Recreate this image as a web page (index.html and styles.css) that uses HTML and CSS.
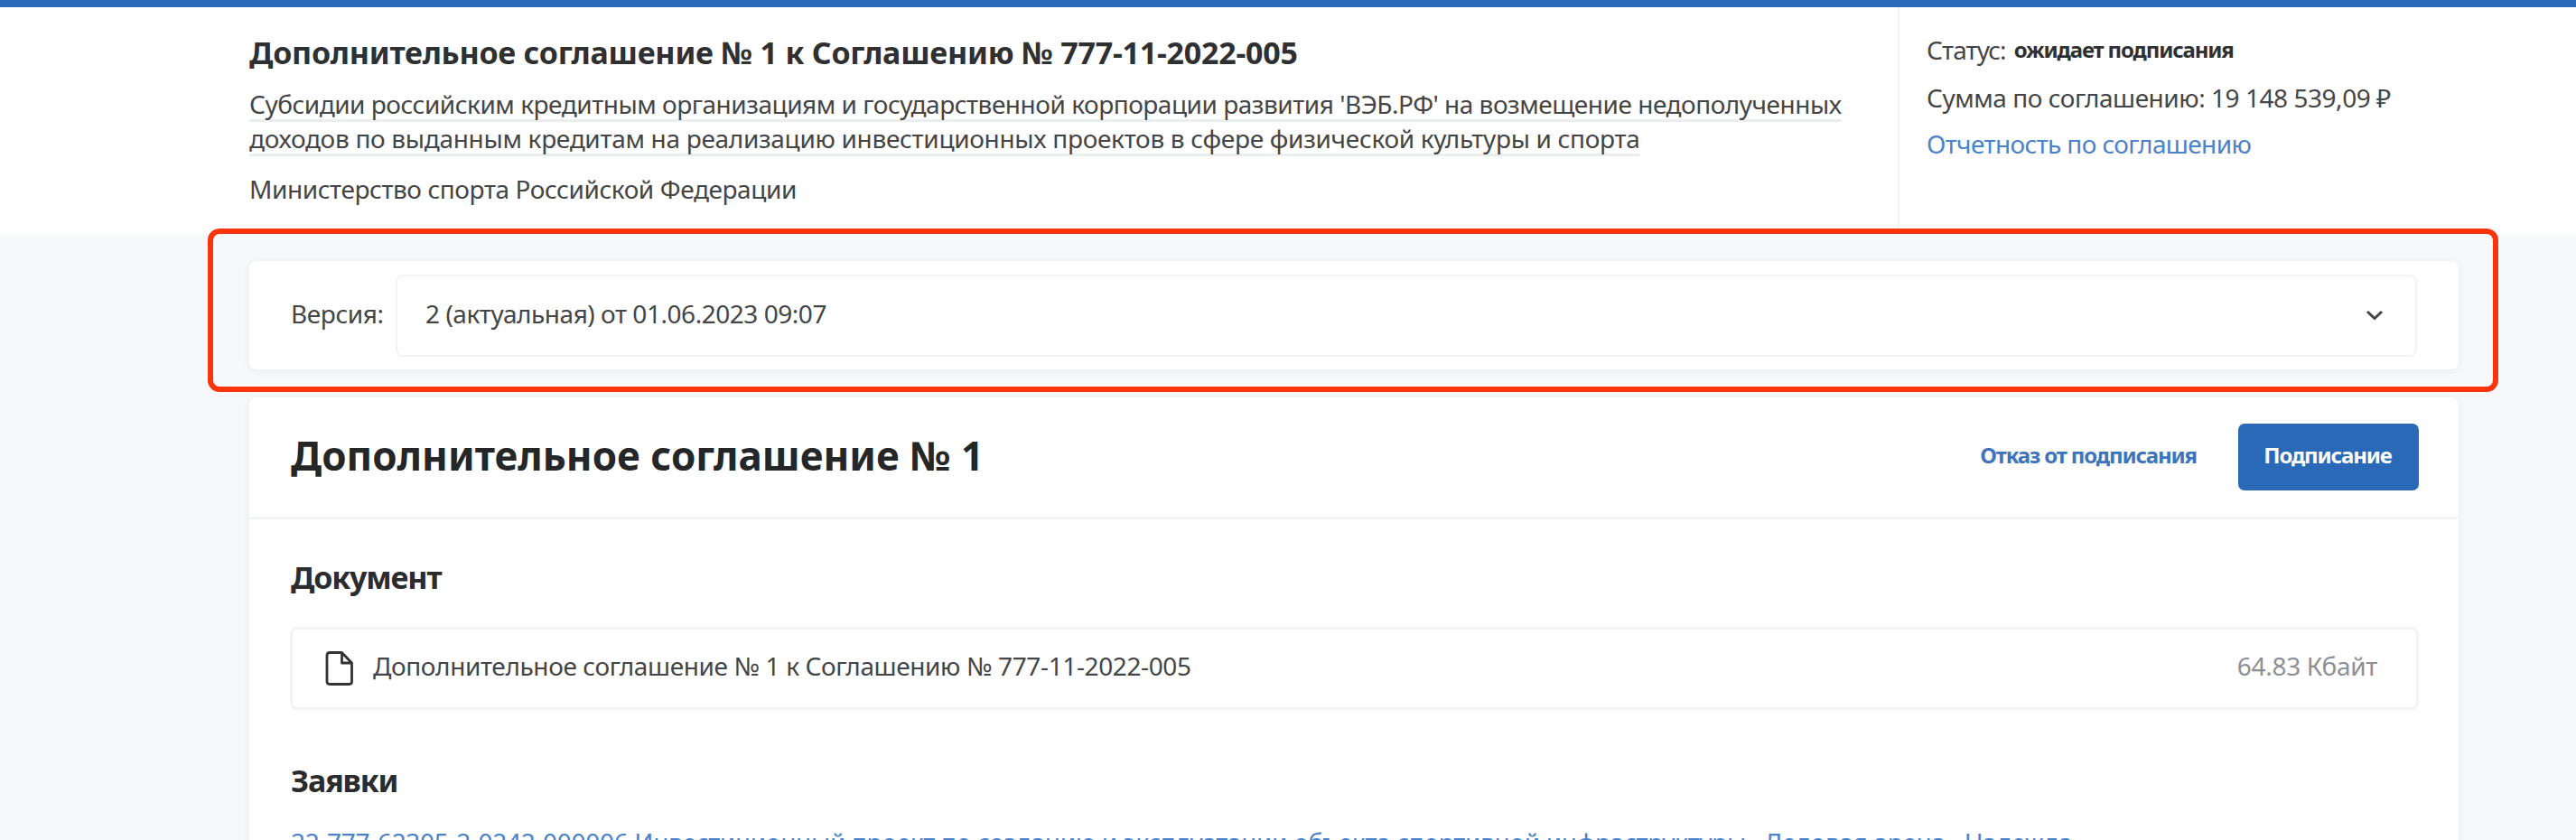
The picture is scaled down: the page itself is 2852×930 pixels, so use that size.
FILE: index.html
```
<!DOCTYPE html>
<html lang="ru">
<head>
<meta charset="utf-8">
<title>Дополнительное соглашение № 1</title>
<link rel="stylesheet" href="styles.css">
</head>
<body>
<div class="page">
  <header class="header">
    <div class="header-main">
      <h1 class="header-title">Дополнительное соглашение № 1 к Соглашению № 777-11-2022-005</h1>
      <p class="subsidy"><span class="underlined">Субсидии российским кредитным организациям и государственной корпорации развития 'ВЭБ.РФ' на возмещение недополученных</span><br><span class="underlined">доходов по выданным кредитам на реализацию инвестиционных проектов в сфере физической культуры и спорта</span></p>
      <p class="ministry">Министерство спорта Российской Федерации</p>
    </div>
    <div class="header-side">
      <p class="status"><span class="status-label">Статус:</span> <b class="status-value">ожидает подписания</b></p>
      <p class="sum">Сумма по соглашению: 19 148 539,09 ₽</p>
      <a class="report-link">Отчетность по соглашению</a>
    </div>
  </header>
  <main class="content">
    <section class="card version">
      <span class="version-label">Версия:</span>
      <div class="select">
        <span class="select-value">2 (актуальная) от 01.06.2023 09:07</span>
        <svg class="chevron" width="20" height="13" viewBox="0 0 20 13"><path d="M2 2L10 9.500L18 2" fill="none" stroke="#444" stroke-width="3"/></svg>
      </div>
      <div class="highlight"></div>
    </section>
    <section class="card agreement">
      <div class="agreement-head">
        <h2 class="agreement-title">Дополнительное соглашение № 1</h2>
        <div class="actions">
          <a class="reject">Отказ от подписания</a>
          <button class="sign">Подписание</button>
        </div>
      </div>
      <div class="agreement-body">
        <h3 class="section-title">Документ</h3>
        <div class="file">
          <svg class="file-icon" width="32" height="40" viewBox="0 0 32 40"><path d="M5 2.500H18.500L29.500 14V34.500Q29.500 37.500 26.500 37.500H5Q2 37.500 2 34.500V5.500Q2 2.500 5 2.500ZM18.500 2.500V14H29.500" fill="none" stroke="#333" stroke-width="2.800" stroke-linejoin="round"/></svg>
          <span class="file-name">Дополнительное соглашение № 1 к Соглашению № 777-11-2022-005</span>
          <span class="file-size">64.83 Кбайт</span>
        </div>
        <h3 class="section-title requests-title">Заявки</h3>
        <a class="request">22-777-62305-2-0242-000006 Инвестиционный проект по созданию и эксплуатации объекта спортивной инфраструктуры «Ледовая арена «Надежда»</a>
      </div>
    </section>
  </main>
</div>
</body>
</html>
```
FILE: styles.css
```
* { box-sizing: border-box; }
body {
  margin: 0;
  background: #f7f8fa;
  color: #444546;
  font: 28px/38px "Noto Sans", "Open Sans", sans-serif;
  letter-spacing: -0.42px;
}
h1, h2, h3, p { margin: 0; }
.page { height: 930px; overflow: hidden; }

.header {
  display: flex;
  height: 259px;
  padding-left: 276px;
  background: #fff;
  border-top: 8px solid #2a69b7;
}
.header-main { width: 1825px; padding-top: 30px; white-space: nowrap; }
.header-title {
  color: #2f3031;
  font-size: 34px;
  line-height: 40px;
  letter-spacing: -0.24px;
}
.subsidy { margin-top: 18px; letter-spacing: -0.48px; }
.subsidy .underlined:last-child { letter-spacing: -0.31px; }
.underlined {
  text-decoration: underline;
  text-decoration-color: #ebeeef;
  text-decoration-thickness: 3px;
  text-decoration-skip-ink: none;
  text-underline-offset: 6px;
}
.ministry { margin-top: 18px; }
.header-side {
  flex: 1;
  padding: 28px 0 0 30px;
  border-left: 2px solid #f0f2f5;
}
.status { display: flex; gap: 9px; }
.status-label { letter-spacing: -0.9px; }
.status-value { color: #2f3031; font-size: 24px; letter-spacing: -1.15px; }
.sum { margin-top: 15px; letter-spacing: -0.46px; }
.report-link { display: block; margin-top: 13px; color: #4b82ca; letter-spacing: -0.62px; }

.content { width: 2722px; padding: 30px 0 0 276px; }
.card {
  background: #fff;
  border-radius: 8px;
  box-shadow: 0 2px 10px rgba(40, 50, 60, 0.07);
}
.version {
  position: relative;
  display: flex;
  align-items: center;
  height: 120px;
  padding: 0 46px;
}
.version-label { width: 116px; padding-bottom: 4px; }
.select {
  display: flex;
  flex: 1;
  align-items: center;
  justify-content: space-between;
  height: 91px;
  padding: 0 35px 0 31px;
  border: 2px solid #f1f3f5;
  border-radius: 8px;
}
.select-value { padding-bottom: 4px; letter-spacing: -0.46px; }
.highlight {
  position: absolute;
  inset: -36px -44px -25px -46px;
  border: 6px solid #f8350d;
  border-radius: 13px;
}

.agreement { height: 521px; margin-top: 31px; }
.agreement-head {
  display: flex;
  align-items: center;
  justify-content: space-between;
  height: 135px;
  padding: 0 44px 0 46px;
  border-bottom: 3px solid #f2f4f6;
}
.agreement-title {
  padding-bottom: 5px;
  color: #252627;
  font-size: 44px;
  line-height: 50px;
  letter-spacing: 0.05px;
}
.actions { display: flex; align-items: center; gap: 46px; }
.reject, .sign {
  padding-bottom: 5px;
  font-size: 24px;
  font-weight: 700;
  letter-spacing: -1.15px;
}
.reject { color: #3d74bd; }
.sign {
  width: 200px;
  height: 74px;
  padding: 0 2px 5px 0;
  border: 0;
  border-radius: 7px;
  background: #2a69b7;
  color: #fff;
  font-family: inherit;
}
.agreement-body { padding: 44px 44px 0 46px; }
.section-title {
  color: #2b2c2d;
  font-size: 34px;
  line-height: 40px;
  letter-spacing: -1.15px;
}
.file {
  display: flex;
  align-items: center;
  height: 92px;
  margin: 35px 0 58px -1px;
  padding: 0 43px 0 36px;
  border: 3px solid #f1f3f5;
  border-radius: 8px;
}
.file-name { margin-left: 21px; padding-bottom: 6px; letter-spacing: -0.38px; }
.file-size { margin-left: auto; padding-bottom: 6px; color: #8b8f97; letter-spacing: -0.3px; }
.request {
  display: block;
  margin-top: 29px;
  color: #4b82ca;
  letter-spacing: -0.31px;
  white-space: nowrap;
}
```
